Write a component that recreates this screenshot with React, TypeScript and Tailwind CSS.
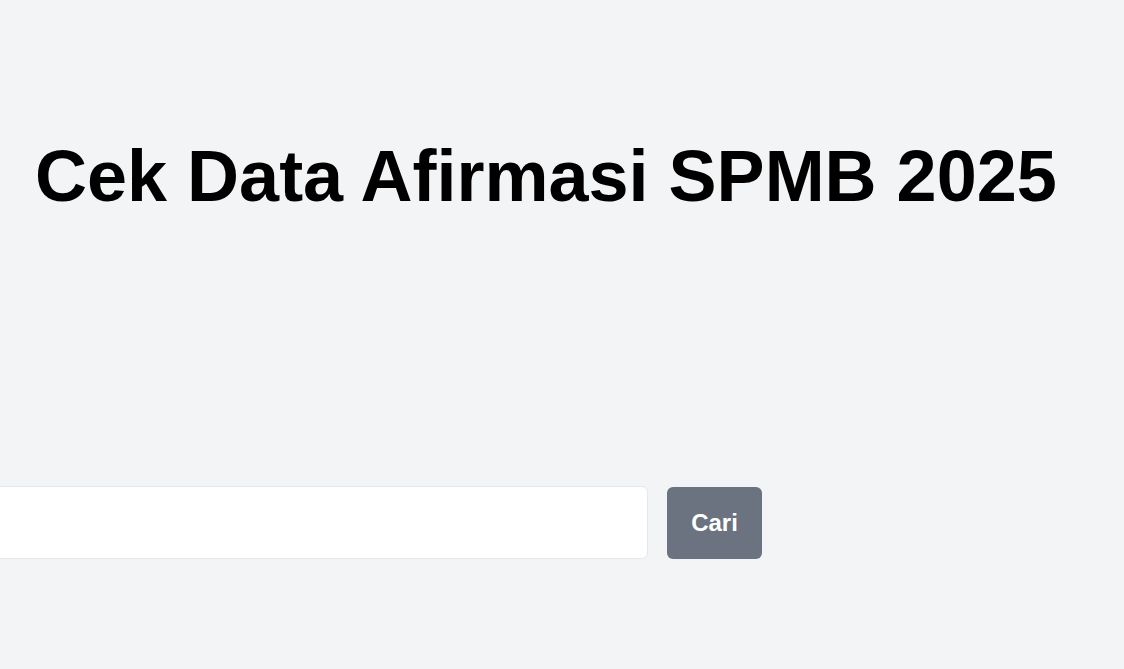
export default function App() {
  return (
    <main className="min-h-[669px] w-full overflow-hidden bg-[#f3f4f6] font-['Liberation_Sans',Arial,sans-serif]">
      <div className="pt-[134px]">
        <h1 className="pl-[35px] text-[72px] font-bold leading-[84px] text-black">
          Cek Data Afirmasi SPMB 2025
        </h1>
      </div>
      <div className="mt-[268px] flex items-center gap-[19px]">
        <input
          type="text"
          className="-ml-[40px] h-[73px] w-[688px] rounded-md border border-[#e5e7eb] bg-white px-4 text-xl outline-none"
        />
        <button
          type="button"
          className="h-[72px] w-[95px] rounded-md bg-[#6b7280] text-[24px] font-bold text-white"
        >
          Cari
        </button>
      </div>
    </main>
  );
}
